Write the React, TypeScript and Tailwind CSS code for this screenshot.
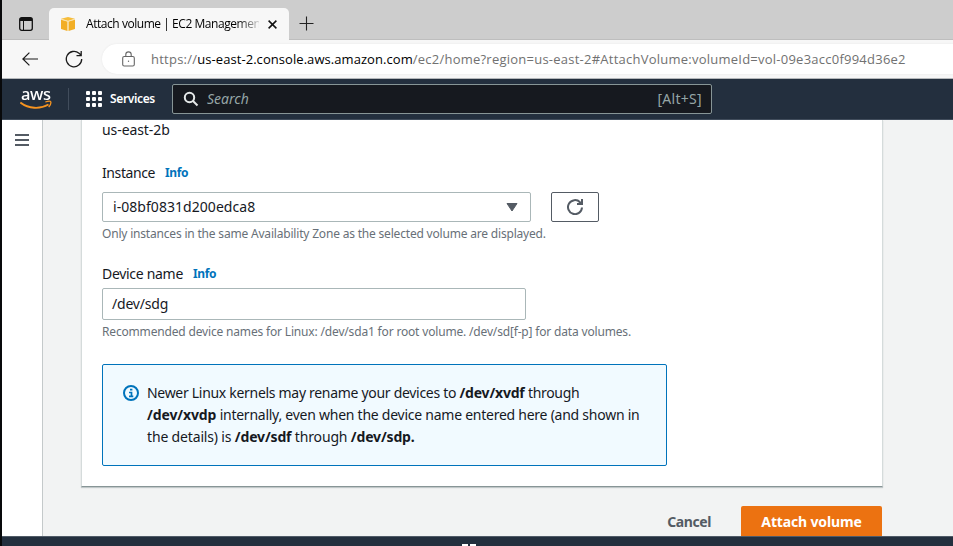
import React from "react";

const Info = () => (
  <a className="ml-[10px] text-[12px] font-bold tracking-[-0.4px] text-[#0073bb]">Info</a>
);

function BrowserChrome() {
  return (
    <header className="h-[79px] shrink-0 border-b border-[#b5b8bb] bg-[#f7f7f7] font-['Open_Sans','Noto_Sans',sans-serif]">
      <div className="flex h-10 items-start bg-[#cdcdcd]">
        <div className="flex h-10 w-[47px] shrink-0 items-end border-b border-[#bebebe] pb-[8px] pl-[17px]">
          <svg width="14" height="14" viewBox="0 0 14 14" fill="none" stroke="#111" strokeWidth="1.3">
            <rect x=".7" y=".7" width="12.6" height="12.6" rx="2" />
            <path d="M1 2.5h12" strokeWidth="3" />
            <path d="M4.5 4v9" strokeWidth="1" />
          </svg>
        </div>
        <div className="mt-2 flex h-8 w-[240px] shrink-0 items-center rounded-t-[5px] bg-[#f7f7f7] pl-[11px]">
          <svg width="16" height="16" viewBox="0 0 16 16">
            <path d="M1 2.8 8 1l7 1.8L8 5z" fill="#f6bd3b" />
            <path d="m1 3.6 6.5 2V15L1 13z" fill="#f2ae25" />
            <path d="m15 3.6-6.5 2V15l6.5-2z" fill="#f2ae25" />
            <path d="M1 3.3 8 5.3l7-2M8 5v10" stroke="#fbe0a0" strokeWidth=".8" fill="none" />
          </svg>
          <span className="ml-[10px] w-[173px] whitespace-nowrap bg-gradient-to-r from-black from-85% to-[#d5d5d5] bg-clip-text text-[12px] leading-[18px] tracking-[-0.45px] text-transparent">
            Attach volume | EC2 Managemen
          </span>
          <svg className="ml-[9px]" width="9" height="9" viewBox="0 0 9 9" stroke="#111" strokeWidth="1.5">
            <path d="m.6.6 7.8 7.8M8.4.6.6 8.4" />
          </svg>
        </div>
        <div className="flex h-10 flex-1 items-center border-b border-[#bebebe] pl-[10px] pt-[7px]">
          <svg width="15" height="15" viewBox="0 0 15 15" stroke="#222" strokeWidth="1.1">
            <path d="M.5 7.5h14M7.5.5v14" />
          </svg>
        </div>
      </div>
      <div className="flex h-[38px] items-center pl-5">
        <svg width="16" height="14" viewBox="0 0 16 14" fill="none" stroke="#1b1b1b" strokeWidth="1.2">
          <path d="M16 7H.9M7.4.6.9 7l6.5 6.4" />
        </svg>
        <svg className="ml-[27px]" width="18" height="18" viewBox="0 0 18 18" fill="none" stroke="#1b1b1b" strokeWidth="1.3">
          <path d="M16.7 9A7.7 7.7 0 1 1 14 3.2L16 5M16.2 1v4.6h-4.7" />
        </svg>
        <div className="ml-[19px] flex h-[30px] flex-1 items-center rounded-l-full bg-white pl-[20px] shadow-[0_0_2px_#e5e5e5]">
          <svg width="13" height="16" viewBox="0 0 13 16" fill="none" stroke="#666" strokeWidth="1.1">
            <rect x=".7" y="5.5" width="11.6" height="9.5" rx="1.5" />
            <path d="M3.8 5.5V3.6a2.7 2.7 0 0 1 5.4 0v1.9" />
            <circle cx="6.5" cy="10.2" r=".7" fill="#666" stroke="none" />
          </svg>
          <span className="ml-[16px] whitespace-nowrap pt-px text-[13px] tracking-[0.24px] text-[#717171]">
            https://<span className="tracking-[0.06px] text-black">us-east-2.console.aws.amazon.com</span>
            /ec2/home?region=us-east-2#AttachVolume:volumeId=vol-09e3acc0f994d36e2
          </span>
        </div>
      </div>
    </header>
  );
}

function AwsNav() {
  return (
    <nav className="flex h-[41px] shrink-0 items-center border-b border-[#414d5c] bg-[#232f3e] pl-[18px] text-white">
      <div className="relative h-[24px] w-[32px]">
        <span className="ml-px block h-[18px] w-[30px] origin-left scale-x-[1.03] text-[16px] font-medium leading-[15px] tracking-[-0.3px]">aws</span>
        <svg className="absolute left-0 top-0" width="32" height="24" viewBox="0 0 32 24">
          <path d="M.3 15.5c8.5 6.5 19.5 7 28.2 2" fill="none" stroke="#f79420" strokeWidth="1.9" />
          <path d="M25.3 15c3-.9 5-1 5.4-.3.4.9-.4 3.5-2 5.5" fill="none" stroke="#f79420" strokeWidth="1.3" />
        </svg>
      </div>
      <div className="ml-[16px] h-[22px] w-px bg-[#414d5c]" />
      <div className="ml-[17px] grid grid-cols-3 gap-[2px]">
        {Array.from({ length: 9 }, (_, i) => (
          <i key={i} className="size-[4px] rounded-[1px] bg-white" />
        ))}
      </div>
      <span className="ml-[8px] w-[46px] whitespace-nowrap text-[12px] font-semibold tracking-[-0.36px]">Services</span>
      <div className="ml-[16px] flex h-[30px] w-[540px] items-center rounded-[2px] border border-[#879596] bg-[#16191f] px-[10px] text-[14px] text-[#95a5a6]">
        <svg width="16" height="16" viewBox="0 0 16 16" fill="none" stroke="#e5e9e9" strokeWidth="2">
          <circle cx="6.5" cy="6.5" r="4.7" />
          <path d="m10 10 4.5 4.5" />
        </svg>
        <em className="ml-[8px] flex-1 pb-px">Search</em>
        <span className="-mr-px pb-px tracking-[0.3px]">[Alt+S]</span>
      </div>
    </nav>
  );
}

function AttachForm() {
  return (
    <section className="h-[367px] w-[802px] border border-t-0 border-[#d5dbdb] border-b-[#879596] bg-white pl-[20px] text-[14px] leading-[22px] shadow-[0_1px_1px_rgba(0,28,36,0.2)]">
      <div className="h-[41px] leading-[20px] tracking-[-0.08px]">us-east-2b</div>
      <label className="flex h-[31px] items-center pb-[8px] tracking-[-0.4px]">Instance<Info /></label>
      <div className="flex">
        <div className="flex h-[30px] w-[429px] items-center justify-between rounded-[2px] border border-[#aab7b8] pl-[10px] pr-[12px]">
          <span className="tracking-[0.05px]">i-08bf0831d200edca8</span>
          <svg width="12" height="9" viewBox="0 0 12 9"><path d="M1 .5h10L6 8z" fill="#545b64" stroke="#545b64" strokeLinejoin="round" /></svg>
        </div>
        <button className="ml-5 flex h-[30px] w-[48px] items-center justify-center rounded-[2px] border border-[#545b64]">
          <svg width="16" height="16" viewBox="0 0 16 16" fill="none" stroke="#545b64" strokeWidth="2">
            <path d="M15 8.5A7 7 0 1 1 13 3.2L15 5M15 0v5h-5" />
          </svg>
        </button>
      </div>
      <p className="h-[40px] text-[12px] leading-[24px] tracking-[-0.19px] text-[#687078]">Only instances in the same Availability Zone as the selected volume are displayed.</p>
      <label className="flex h-[26px] items-center pb-[3px] tracking-[-0.3px]">Device name<Info /></label>
      <div className="flex h-[32px] w-[424px] items-center rounded-[2px] border border-[#aab7b8] pl-[9px] tracking-[-0.2px]">/dev/sdg</div>
      <p className="h-[44px] text-[12px] leading-[24px] tracking-[-0.17px] text-[#687078]">Recommended device names for Linux: /dev/sda1 for root volume. /dev/sd[f-p] for data volumes.</p>
      <div className="flex h-[102px] w-[565px] rounded-[2px] border border-[#0073bb] bg-[#f1faff] pl-[20px] pt-[17px]">
        <svg className="mt-[3px] shrink-0" width="16" height="16" viewBox="0 0 16 16" fill="none" stroke="#0073bb" strokeWidth="2">
          <circle cx="8" cy="8" r="7" />
          <path d="M7 4.7h2.4M6 7.5h2.5V11M6 11.3h4.3" strokeWidth="1.7" />
        </svg>
        <div className="ml-[8px] whitespace-nowrap tracking-[-0.25px]">
          <p className="tracking-[-0.3px]">Newer Linux kernels may rename your devices to <b className="tracking-[-0.2px]">/dev/xvdf</b> through</p>
          <p><b className="tracking-[-0.12px]">/dev/xvdp</b> internally, even when the device name entered here (and shown in</p>
          <p className="tracking-[-0.16px]">the details) is <b>/dev/sdf</b> through <b>/dev/sdp.</b></p>
        </div>
      </div>
    </section>
  );
}

export default function App() {
  return (
    <div className="flex h-[546px] w-[953px] flex-col overflow-hidden border-l-2 border-[#08090b] bg-[#f2f3f3] font-['Noto_Sans',sans-serif] text-[#16191f]">
      <BrowserChrome />
      <AwsNav />
      <main className="flex h-[416px] shrink-0">
        <aside className="w-[41px] shrink-0 border-r border-[#c4c9ca] bg-white pl-[13px] pt-[14px]">
          <svg width="14" height="12" viewBox="0 0 14 12" stroke="#545b64" strokeWidth="2"><path d="M0 1h14M0 6h14M0 11h14" /></svg>
        </aside>
        <div className="ml-[38px] w-[802px]">
          <AttachForm />
          <div className="flex h-[49px] items-start justify-end pt-[19px] text-[14px] font-bold">
            <button className="mr-[30px] h-[30px] tracking-[-0.4px] text-[#545b64]">Cancel</button>
            <button className="mr-px h-[30px] w-[141px] rounded-t-[2px] bg-[#ec7211] tracking-[-0.15px] text-white">Attach volume</button>
          </div>
        </div>
      </main>
      <footer className="flex h-[10px] shrink-0 items-end gap-[2px] border-t border-[#505b67] bg-[#232f3e] pl-[460px]">
        <i className="h-[2px] w-[6px] bg-white" />
        <i className="h-[2px] w-[6px] bg-white" />
      </footer>
    </div>
  );
}
